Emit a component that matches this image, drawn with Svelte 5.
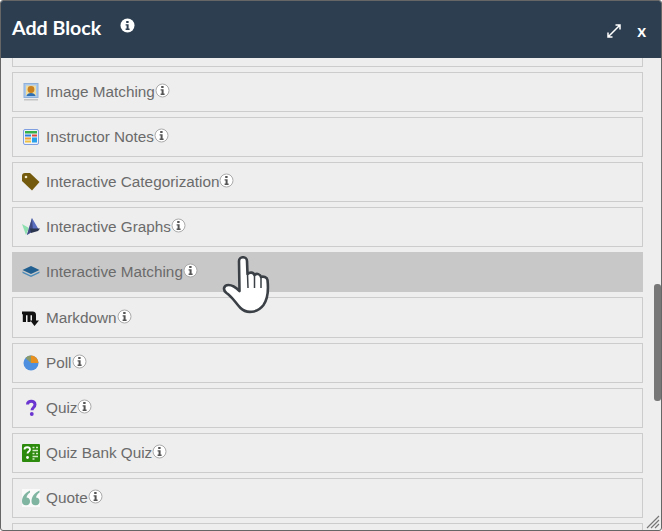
<script lang="ts">
  const blocks = [
    { name: '', icon: 'none' },
    { name: 'Image Matching', icon: 'image' },
    { name: 'Instructor Notes', icon: 'notes' },
    { name: 'Interactive Categorization', icon: 'tag' },
    { name: 'Interactive Graphs', icon: 'graph' },
    { name: 'Interactive Matching', icon: 'matching' },
    { name: 'Markdown', icon: 'markdown' },
    { name: 'Poll', icon: 'poll' },
    { name: 'Quiz', icon: 'quiz' },
    { name: 'Quiz Bank Quiz', icon: 'bank' },
    { name: 'Quote', icon: 'quote' },
    { name: '', icon: 'none' }
  ]
</script>

{#snippet info(dark: boolean)}
  <svg class="info" class:dark viewBox="0 0 15 15" width="15" height="15">
    <circle cx="7.5" cy="7.5" r={dark ? 7 : 6.5} fill="#fff" stroke={dark ? 'none' : '#aaa'} />
    <path d="M6.2 3h2.4v2H6.2zM5.6 6.2h3v4.4h1v1.3H5.6v-1.3h1V7.5h-1z" fill={dark ? '#2c3e50' : '#555'} />
  </svg>
{/snippet}

<div class="window">
  <header class="head">
    <h1>Add Block</h1>
    {@render info(true)}
    <span class="spacer"></span>
    <svg class="expand" viewBox="0 0 16 16" width="16" height="16">
      <path d="M2 14 14 2M9.500 2H14v4.500M2 9.500V14h4.500" fill="none" stroke="#fff" stroke-width="1.500" />
    </svg>
    <span class="close">x</span>
  </header>

  <div class="body">
    <ul class="list">
      {#each blocks as block}
        <li class="row" class:hover={block.name === 'Interactive Matching'}>
          {#if block.icon === 'image'}
            <svg class="icon" viewBox="0 0 18 18">
              <rect x="2" y="0.500" width="14" height="14" fill="#a9c8ee" stroke="#8fb0d8" />
              <rect x="4" y="2.500" width="10" height="10" fill="#efdca0" />
              <circle cx="9" cy="6.500" r="3.400" fill="#c9801f" />
              <path d="M4.500 13c.5-4 8.500-4 9 0z" fill="#2f6fb0" />
              <rect x="2" y="16" width="14" height="1.500" fill="#c4c4c4" />
            </svg>
          {:else if block.icon === 'notes'}
            <svg class="icon" viewBox="0 0 18 18">
              <rect x="1.500" y="1.500" width="15" height="15" rx="1.500" fill="#eef3fb" stroke="#7f9fe0" />
              <rect x="3" y="3" width="12" height="2.500" fill="#35b04a" />
              <rect x="3" y="6.500" width="6" height="2" fill="#2f7fe0" />
              <rect x="3" y="9.500" width="6" height="2" fill="#f0a030" />
              <rect x="3" y="12.500" width="6" height="2" fill="#f0c040" />
              <rect x="10" y="6.500" width="5" height="2" fill="#e04a3a" />
              <rect x="10" y="9.500" width="5" height="5" fill="#2aa0e8" />
            </svg>
          {:else if block.icon === 'tag'}
            <svg class="icon" viewBox="0 0 18 18">
              <path d="M0 3Q0 0 3 0H8l9.500 9-7.500 8.500L0 8z" fill="#745a0c" />
              <circle cx="4" cy="4" r="1.300" fill="#f1e9c8" />
            </svg>
          {:else if block.icon === 'graph'}
            <svg class="icon" viewBox="0 0 18 18">
              <path d="M0 6l7 4-3 7z" fill="#8fe0b0" />
              <path d="M10 0l7 12-6 1-6 4z" fill="#5a6fc0" />
              <path d="M10 0l1 13-6 4z" fill="#3f4a80" />
              <path d="M8 10.500h10l-2 2.500-7 2z" fill="#2a3550" />
            </svg>
          {:else if block.icon === 'matching'}
            <svg class="icon" viewBox="0 0 18 18">
              <path d="M0.500 7 9 3l8.500 4L9 11z" fill="#205f8f" />
              <path d="M0.500 8.500 9 12.500l8.500-4V10L9 14 .5 10z" fill="#4a8ab8" />
            </svg>
          {:else if block.icon === 'markdown'}
            <svg class="icon" viewBox="0 0 18 18">
              <path d="M0 2.500h10.500c2.500 0 3.500 1.500 3.500 3.500v5.500h3L12.500 17 8.300 11.500h1.700V6.200H8.500V13H5.500V6.200H4V13H.8V5.200H0z" fill="#111" />
            </svg>
          {:else if block.icon === 'poll'}
            <svg class="icon" viewBox="0 0 18 18">
              <circle cx="9" cy="9" r="7.500" fill="#4f8fe0" />
              <path d="M9 9V1.500a7.500 7.500 0 0 1 7.500 7.500z" fill="#e8901f" />
              <path d="M9 9V1.500a7.500 7.500 0 0 0-5.500 2.400z" fill="#8a9a6a" />
            </svg>
          {:else if block.icon === 'quiz'}
            <svg class="icon" viewBox="0 0 18 18">
              <path d="M5.500 5.500C5.500 1 13 1 13 5.500c0 3-3 3-3 5.800" fill="none" stroke="#6a35d0" stroke-width="3" />
              <circle cx="9.800" cy="15" r="1.900" fill="#6a35d0" />
            </svg>
          {:else if block.icon === 'bank'}
            <svg class="icon" viewBox="0 0 18 18">
              <rect width="18" height="18" rx="1" fill="#2c8a0c" />
              <path d="M2.500 5.500C2.500 2.500 8 2.500 8 5.500c0 2-2.500 2-2.500 4" fill="none" stroke="#fff" stroke-width="1.800" />
              <circle cx="5.500" cy="13.500" r="1.400" fill="#fff" />
              <path d="M10.500 3.500h2M14 3.500h2M10.500 6.500h5.500M10.500 9.500h2M14 9.500h2M10.500 12.500h5.500M10.500 15h2" stroke="#d5ecc8" stroke-width="1.400" />
            </svg>
          {:else if block.icon === 'quote'}
            <svg class="icon" viewBox="0 0 18 18">
              <rect width="18" height="18" fill="#fafafa" />
              <path d="M8 1.500C3 4 0 7.500 0 12.500a4 4 0 1 0 8-.5c0-2.500-2-3.500-3.500-3.500C5 6 6 5 8 3.500zM17.500 1.500C12.500 4 9.500 7.500 9.500 12.500a4 4 0 1 0 8-.5c0-2.500-2-3.500-3.500-3.500.5-2.500 1.500-3.500 3.500-5z" fill="#80b5a2" />
            </svg>
          {/if}
          {#if block.name}
            <span class="label">{block.name}</span>
            {@render info(false)}
          {/if}
        </li>
      {/each}
    </ul>
    <div class="track"><div class="thumb"></div></div>
  </div>

  <svg class="grip" viewBox="0 0 14 14" width="14" height="14">
    <path d="M1 13 13 1M5 13l8-8M9 13l4-4" stroke="#777" stroke-width="1.200" fill="none" />
  </svg>

  <svg class="hand" viewBox="0 0 48 60" width="48" height="60">
    <path
      d="M17 5c0-5 8-5 8 0l.5 13c2-2 6-2 7 1 2-2 6-1 6.500 2 2-1 6 0 6.500 3 1 9 1 18-4 25-6 8-17 9-23 3-5-5-8-11-14-15-4-3-3-8 2-8 4 0 8 3 11 6z"
      fill="#fff"
      stroke="#3a4046"
      stroke-width="2.600"
      stroke-linejoin="round"
    />
    <path d="M25.500 18 26 32M32.500 19v13M39 21v11" stroke="#3a4046" stroke-width="1.500" fill="none" />
  </svg>
</div>

<style>
  :global(body) {
    margin: 0;
  }

  .window {
    position: relative;
    box-sizing: border-box;
    width: 662px;
    height: 531px;
    display: flex;
    flex-direction: column;
    overflow: hidden;
    background: #eee;
    border: 1px solid #666;
    border-radius: 3px;
    font-family: 'Liberation Sans', Arial, sans-serif;
  }

  .head {
    flex: none;
    height: 57px;
    display: flex;
    align-items: center;
    padding: 0 15px 0 11px;
    background: #2c3e50;
    color: #fff;
  }

  h1 {
    margin: 0 20px 4px 0;
    font: 700 19.6px Lato, sans-serif;
  }

  .info.dark {
    margin: 0 0 9px -1px;
  }

  .spacer {
    flex: 1;
  }

  .expand {
    margin-right: 15px;
    margin-top: 3px;
  }

  .close {
    font: 700 17px Lato, sans-serif;
    margin-top: 1px;
  }

  .body {
    flex: 1;
    min-height: 0;
    display: flex;
    overflow: hidden;
  }

  .list {
    flex: 1;
    list-style: none;
    margin: -31.1px 0 0;
    padding: 0 11px;
  }

  .row {
    box-sizing: border-box;
    height: 40.1px;
    margin-bottom: 5px;
    display: flex;
    align-items: center;
    padding-left: 9px;
    border: 1px solid #ccc;
    color: #6b6b6b;
    font-size: 15.3px;
  }

  .row.hover {
    background: #c8c8c8;
    border-color: #c8c8c8;
  }

  .icon {
    width: 18px;
    height: 18px;
    flex: none;
    margin-right: 6px;
  }

  .info {
    flex: none;
    margin-bottom: 3px;
  }

  .track {
    flex: none;
    width: 7px;
  }

  .thumb {
    height: 117px;
    margin-top: 226px;
    background: #777;
    border-radius: 3px;
  }

  .grip {
    position: absolute;
    right: 1px;
    bottom: 1px;
  }

  .hand {
    position: absolute;
    left: 221px;
    top: 255px;
  }
</style>
